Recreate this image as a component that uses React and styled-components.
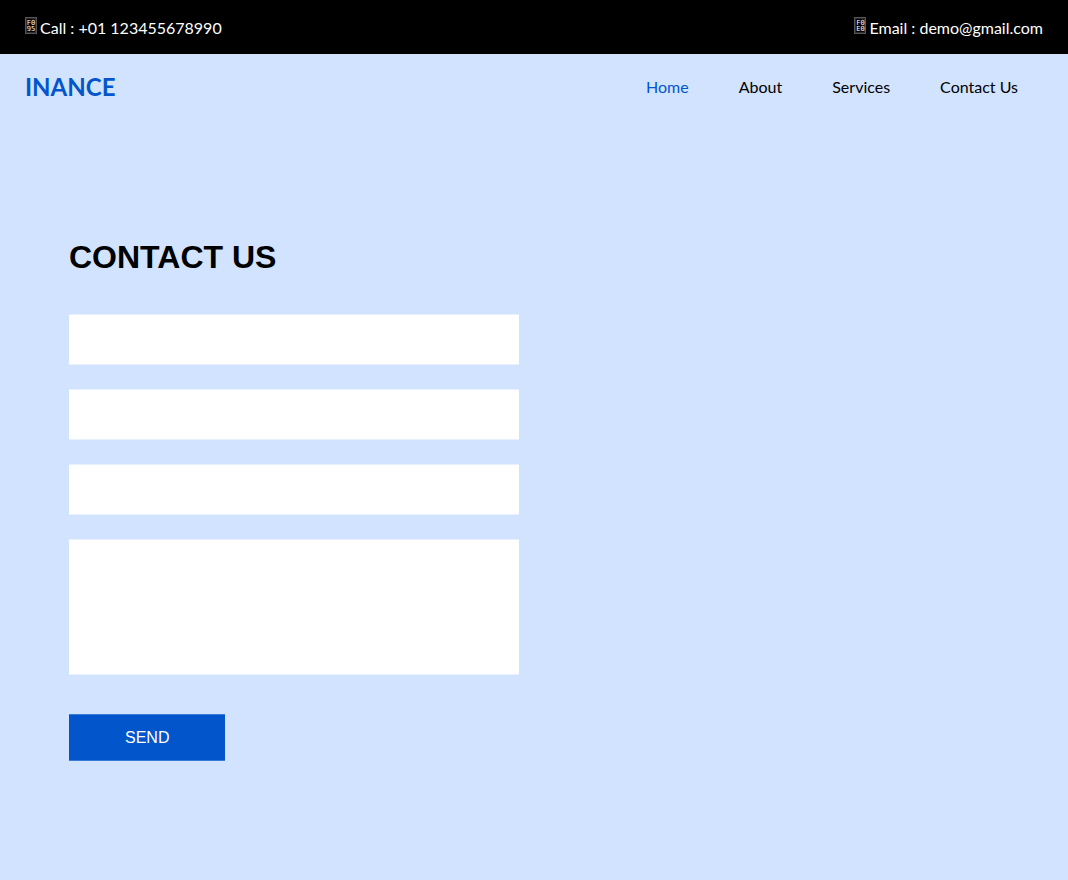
import React from "react";
import styled, { createGlobalStyle } from "styled-components";

const GlobalStyle = createGlobalStyle`
  *, *::before, *::after { box-sizing: border-box; }
  body {
    margin: 0;
    background: #d2e3ff;
    color: #000;
    font-family: Lato, sans-serif;
    font-size: 16px;
  }
`;

const TopBar = styled.div`
  display: flex;
  justify-content: space-between;
  align-items: center;
  padding: 16px 25px 14px;
  background: #000;
`;

const ContactLink = styled.a`
  display: flex;
  align-items: flex-start;
  gap: 3px;
  color: #fff;
  line-height: 24px;
  text-decoration: none;
`;

const CodeBox = styled.span`
  display: flex;
  flex-direction: column;
  align-items: center;
  justify-content: center;
  width: 12px;
  height: 17px;
  margin-top: 1px;
  border: 1px solid #555;
  box-shadow: inset 0 0 0 1px #2c2c2c;
  font-family: "DejaVu Sans Mono", monospace;
  font-size: 7px;
  line-height: 6px;
`;

const Header = styled.header`
  display: flex;
  justify-content: space-between;
  align-items: center;
  padding: 15px 25px;
`;

const Brand = styled.a`
  color: #0355cc;
  font-size: 24px;
  font-weight: 700;
  line-height: 36px;
  text-decoration: none;
`;

const Nav = styled.nav`
  display: flex;
  gap: 50px;
  padding: 0 25px;
`;

const NavLink = styled.a`
  color: ${({ $active }) => ($active ? "#0355cc" : "#000")};
  line-height: 24px;
  text-decoration: none;
`;

const Section = styled.main`
  display: grid;
  grid-template-columns: repeat(auto-fit, minmax(280px, 1fr));
  gap: 30px;
  max-width: 970px;
  margin: 0 auto;
  padding: 118px 20px;
`;

const Title = styled.h1`
  margin: 0 0 38px;
  font-family: "Liberation Sans", Arial, sans-serif;
  font-size: 32px;
  font-weight: 700;
  line-height: 38px;
`;

const Form = styled.form`
  display: flex;
  flex-direction: column;
  gap: 24px;
`;

const Field = styled.input`
  display: block;
  width: 100%;
  height: ${({ $tall }) => ($tall ? "136px" : "51px")};
  padding: 12px 24px;
  border: solid #e9f1ff;
  border-width: 1px 0;
  border-radius: 0;
  background: #fff;
  font: inherit;
  resize: none;
  outline: none;
`;

const SendButton = styled.button`
  align-self: flex-start;
  margin-top: 15px;
  height: 47px;
  padding: 0 56px;
  border: solid #3c7bd9;
  border-width: 1px 0;
  background: #0355cc;
  color: #fff;
  font-family: "Liberation Sans", Arial, sans-serif;
  font-size: 16px;
  cursor: pointer;
`;

const links = ["Home", "About", "Services", "Contact Us"];

function CodeIcon({ top, bottom }) {
  return (
    <CodeBox aria-hidden="true">
      <span>{top}</span>
      <span>{bottom}</span>
    </CodeBox>
  );
}

export default function App() {
  return (
    <>
      <GlobalStyle />
      <TopBar>
        <ContactLink href="tel:+01123455678990">
          <CodeIcon top="F0" bottom="95" />
          <span>Call : +01 123455678990</span>
        </ContactLink>
        <ContactLink href="mailto:demo@gmail.com">
          <CodeIcon top="F0" bottom="E0" />
          <span>Email : demo@gmail.com</span>
        </ContactLink>
      </TopBar>
      <Header>
        <Brand href="#">INANCE</Brand>
        <Nav>
          {links.map((label, i) => (
            <NavLink key={label} href="#" $active={i === 0}>
              {label}
            </NavLink>
          ))}
        </Nav>
      </Header>
      <Section>
        <div>
          <Title>CONTACT US</Title>
          <Form onSubmit={(e) => e.preventDefault()}>
            <Field type="text" aria-label="Name" />
            <Field type="tel" aria-label="Phone number" />
            <Field type="email" aria-label="Email" />
            <Field as="textarea" $tall aria-label="Message" />
            <SendButton type="submit">SEND</SendButton>
          </Form>
        </div>
        <div />
      </Section>
    </>
  );
}
